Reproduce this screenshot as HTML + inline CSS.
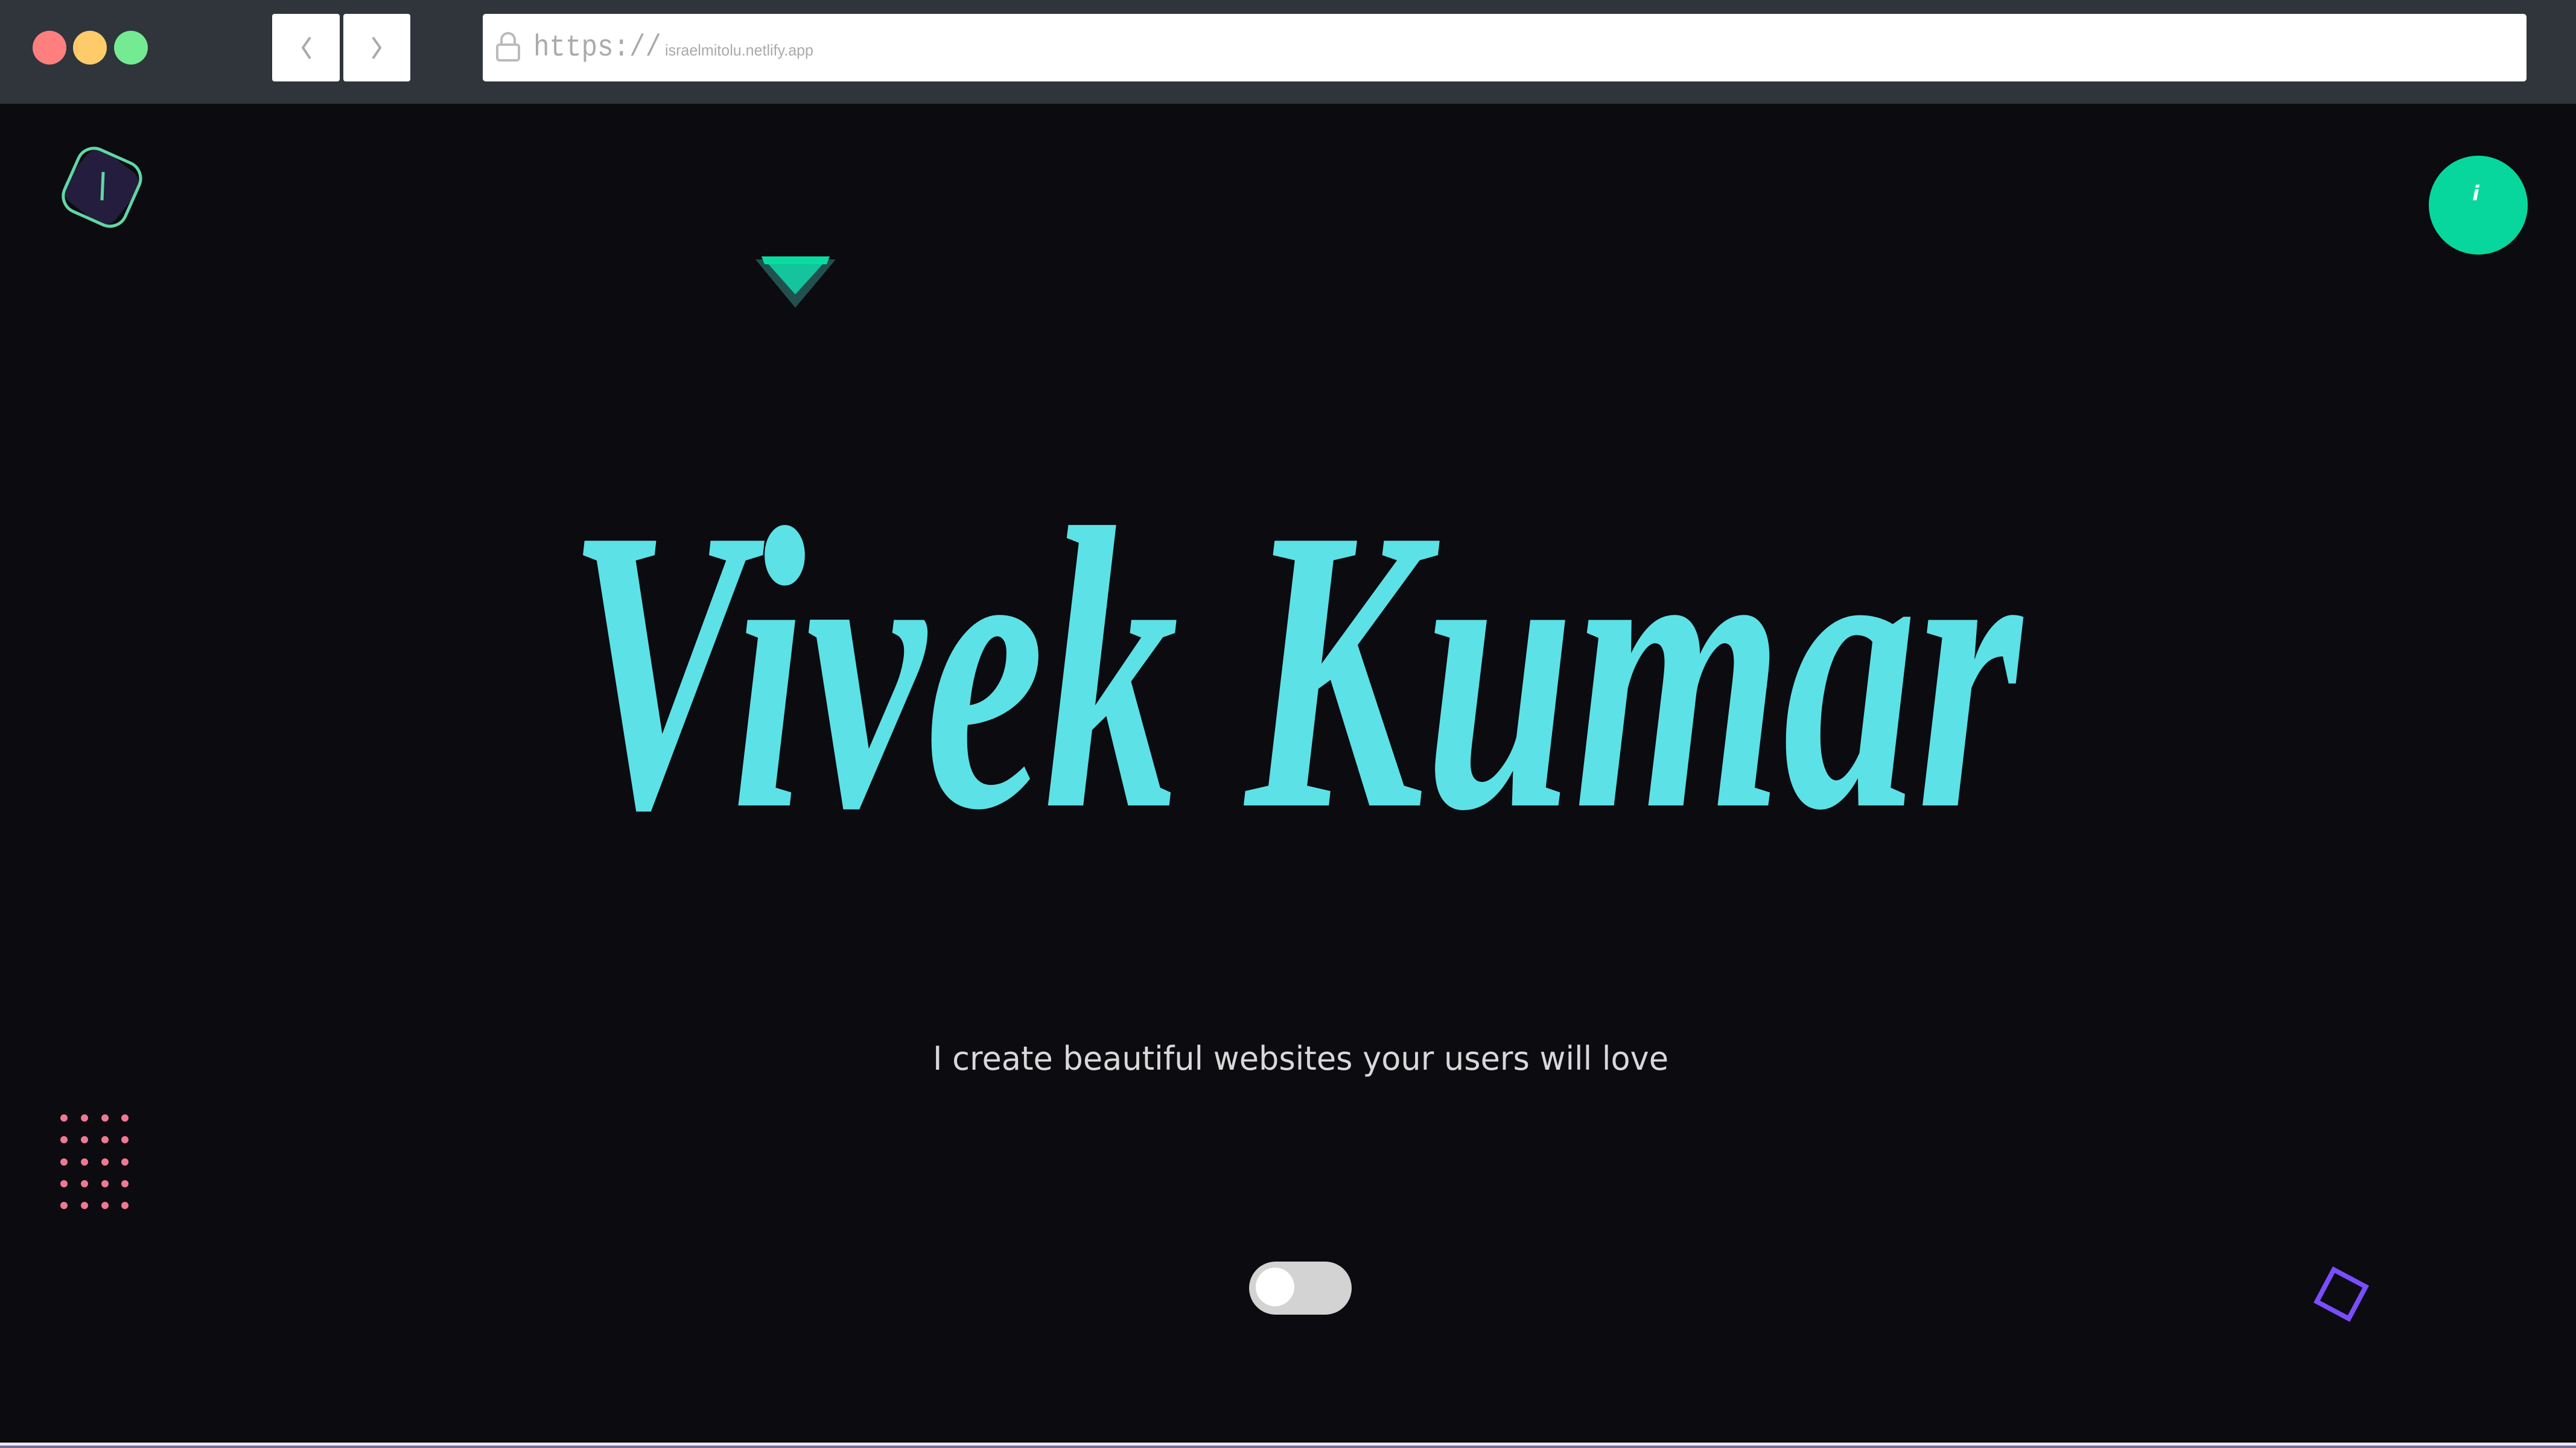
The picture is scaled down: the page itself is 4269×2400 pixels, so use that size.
<!DOCTYPE html>
<html><head><meta charset="utf-8"><style>
html,body{margin:0;padding:0;width:4269px;height:2400px;overflow:hidden;background:#0b0b10;}
svg{display:block}
</style></head><body>
<svg width="4269" height="2400" viewBox="0 0 4269 2400" xmlns="http://www.w3.org/2000/svg">
<rect x="0" y="0" width="4269" height="2400" fill="#0b0b10"/>
<!-- browser bar -->
<rect x="0" y="0" width="4269" height="172" fill="#2f353b"/>
<circle cx="82" cy="79" r="28" fill="#fe7f7e"/>
<circle cx="149" cy="79" r="28" fill="#fecb6b"/>
<circle cx="217" cy="79" r="28" fill="#74ea93"/>
<rect x="451" y="23" width="112" height="112" rx="4" fill="#fff"/>
<rect x="569" y="23" width="111" height="112" rx="4" fill="#fff"/>
<path d="M514 62 L502 79 L514 97" stroke="#aaa" stroke-width="4" fill="none"/>
<path d="M618 62 L630 79 L618 97" stroke="#aaa" stroke-width="4" fill="none"/>
<rect x="800" y="23" width="3387" height="112" rx="5" fill="#fff"/>
<rect x="824" y="74" width="36" height="26" rx="4" fill="none" stroke="#bbb" stroke-width="4"/>
<path d="M831 74 V66 a11 11 0 0 1 22 0 V74" fill="none" stroke="#bbb" stroke-width="4"/>
<text x="884" y="92" font-family="Liberation Mono, monospace" font-size="50" fill="#aaa" textLength="212" lengthAdjust="spacingAndGlyphs">https://</text>
<text x="1102" y="92" font-family="Liberation Sans, sans-serif" font-size="26" fill="#aaa" textLength="246" lengthAdjust="spacingAndGlyphs">israelmitolu.netlify.app</text>
<!-- logo -->
<g transform="translate(168 310) rotate(38)">
<rect x="-52" y="-52" width="104" height="104" rx="26" fill="#241d3d"/>
<rect x="-54" y="-56" width="110" height="112" rx="28" fill="none" stroke="#5fd7a6" stroke-width="5" transform="rotate(-14)"/>
</g>
<line x1="171" y1="285" x2="169" y2="332" stroke="#5fd7a6" stroke-width="5"/>
<!-- triangle -->
<polygon points="1252,430 1385,430 1318,510" fill="#21514f"/>
<polygon points="1262,425 1375,425 1318,488" fill="#13c49c"/>
<polygon points="1262,425 1375,425 1370,438 1267,438" fill="#09dca0"/>
<!-- info circle -->
<circle cx="4107" cy="340" r="82" fill="#07d79c"/>
<text x="4103" y="332" font-family="DejaVu Sans, sans-serif" font-style="italic" font-weight="bold" font-size="34" fill="#fff" text-anchor="middle">i</text>
<!-- title -->
<text x="940" y="1335" font-family="Liberation Serif, serif" font-style="italic" font-weight="bold" font-size="670" fill="#5ce1e6" textLength="2410" lengthAdjust="spacingAndGlyphs">Vivek Kumar</text>
<!-- subtitle -->
<text x="1546" y="1773" font-family="DejaVu Sans, sans-serif" font-size="54" fill="#d8d8d8" textLength="1219" lengthAdjust="spacingAndGlyphs">I create beautiful websites your users will love</text>
<!-- dots -->
<g fill="#f07890">
<circle cx="106" cy="1853" r="6"/><circle cx="140" cy="1853" r="6"/><circle cx="174" cy="1853" r="6"/><circle cx="207" cy="1853" r="6"/>
<circle cx="106" cy="1889" r="6"/><circle cx="140" cy="1889" r="6"/><circle cx="174" cy="1889" r="6"/><circle cx="207" cy="1889" r="6"/>
<circle cx="106" cy="1926" r="6"/><circle cx="140" cy="1926" r="6"/><circle cx="174" cy="1926" r="6"/><circle cx="207" cy="1926" r="6"/>
<circle cx="106" cy="1962" r="6"/><circle cx="140" cy="1962" r="6"/><circle cx="174" cy="1962" r="6"/><circle cx="207" cy="1962" r="6"/>
<circle cx="106" cy="1998" r="6"/><circle cx="140" cy="1998" r="6"/><circle cx="174" cy="1998" r="6"/><circle cx="207" cy="1998" r="6"/>
</g>
<!-- toggle -->
<rect x="2070" y="2091" width="170" height="88" rx="44" fill="#d3d3d3"/>
<circle cx="2113" cy="2133" r="32" fill="#fff"/>
<!-- purple square -->
<rect x="3850" y="2115" width="60" height="60" fill="none" stroke="#7b4dff" stroke-width="8" transform="rotate(28 3880 2145)"/>
<!-- bottom line -->
<rect x="0" y="2391" width="4269" height="5" fill="#e8e8ee"/>
<rect x="0" y="2396" width="4269" height="4" fill="#7a6a9a"/>
</svg>
</body></html>
